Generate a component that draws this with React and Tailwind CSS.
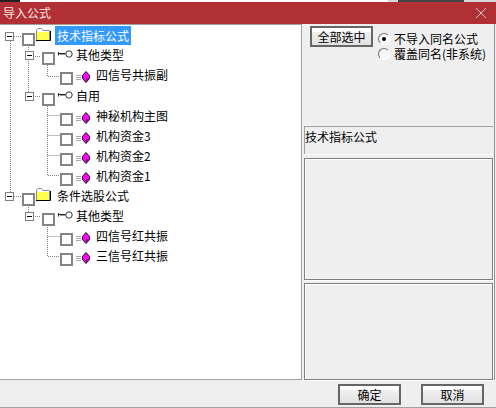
const sans = "font-['Noto_Sans_CJK_SC','Liberation_Sans',sans-serif]";

function Exp() {
  return (
    <span className="w-[9px] h-[9px] border border-[#808080] bg-white shrink-0 flex items-center justify-center">
      <span className="w-[5px] h-px bg-black shrink-0" />
    </span>
  );
}

function Check({ className = "" }) {
  return <span className={`block w-[13px] h-[13px] border-2 border-[#848484] bg-white shrink-0 ${className}`} />;
}

function Folder() {
  return (
    <svg width="15" height="13" viewBox="0 0 15 13" className="block shrink-0">
      <path d="M0.5 12.5V2L2 .5H5.5L7 2.5H13.5V12.5Z" fill="#fff" stroke="#8a8a8a" />
      <rect x="1" y="4" width="12" height="8" fill="#ffff4d" />
      <path d="M0 12.5H14.5V3" fill="none" stroke="#000" />
    </svg>
  );
}

function Key() {
  return (
    <svg width="15" height="8" viewBox="0 0 15 8" className="block shrink-0">
      <path d="M0 3.5H7.5M.5 2V5.5" stroke="#222" fill="none" />
      <path d="M2 4.5H7.5" stroke="#999" />
      <circle cx="11" cy="4" r="3.2" fill="#fff" stroke="#333" />
    </svg>
  );
}

function Gem() {
  return (
    <svg width="14" height="12" viewBox="0 0 14 12" className="block shrink-0">
      <path d="M0 4.5H5M0 6.5H5M0 8.5H5" stroke="#aaa" />
      <path d="M10 .5L13.5 4.5V7.5L10 11.5L6.5 7.5V4.5Z" fill="#ff00ff" stroke="#111" />
      <path d="M10 7L13 7.5L10 11Z" fill="#8b008b" />
    </svg>
  );
}

function Row({ indent, type, label, selected, h = "h-[20px]" }) {
  const pad = { 0: "pl-[5px]", 1: "pl-[25px]", 2: "pl-[60px]" }[indent];
  return (
    <div className={`relative flex items-start ${h} ${pad}`}>
      {indent < 2 && (
        <span className="mt-[5px] mr-[8px] shrink-0">
          <Exp />
        </span>
      )}
      <Check className="mt-[6px]" />
      {type === "folder" && (
        <span className="ml-[1px] mt-[1px] shrink-0">
          <Folder />
        </span>
      )}
      {type === "key" && (
        <span className="ml-[3px] mt-[4px] shrink-0">
          <Key />
        </span>
      )}
      {type === "gem" && (
        <span className="ml-[3px] mt-[5px] shrink-0">
          <Gem />
        </span>
      )}
      <span
        className={`text-[12px] text-black whitespace-nowrap ${
          type === "folder"
            ? "ml-[4px] px-[2px] -mt-px leading-[19px]"
            : type === "key"
            ? "ml-[3px] leading-[18px]"
            : "ml-[6px] leading-[18px]"
        } ${selected ? "bg-[#3399ff] text-white" : ""}`}
      >
        {label}
      </span>
    </div>
  );
}

const rows = [
  { indent: 0, type: "folder", label: "技术指标公式", selected: true, h: "h-[19px]" },
  { indent: 1, type: "key", label: "其他类型" },
  { indent: 2, type: "gem", label: "四信号共振副", h: "h-[21px]" },
  { indent: 1, type: "key", label: "自用" },
  { indent: 2, type: "gem", label: "神秘机构主图" },
  { indent: 2, type: "gem", label: "机构资金3" },
  { indent: 2, type: "gem", label: "机构资金2" },
  { indent: 2, type: "gem", label: "机构资金1" },
  { indent: 0, type: "folder", label: "条件选股公式" },
  { indent: 1, type: "key", label: "其他类型" },
  { indent: 2, type: "gem", label: "四信号红共振" },
  { indent: 2, type: "gem", label: "三信号红共振" },
];

function Guides() {
  const d =
    "M10.5 16V168 M14 11.5H22 M28.5 20V27 M28.5 36V68 M33 31.5H41 M33 71.5H41 M47.5 40V51.5H60 M47.5 81V150.5H60 M47.5 90.5H60 M47.5 110.5H60 M47.5 130.5H60 M14 171.5H22 M28.5 180V188 M33 191.5H41 M47.5 200V231.5H60 M47.5 211.5H60";
  return (
    <svg width="70" height="240" className="absolute left-0 top-0 pointer-events-none" aria-hidden="true">
      <path d={d} fill="none" stroke="#808080" strokeDasharray="1 1" />
    </svg>
  );
}

function Radio({ checked, label }) {
  return (
    <label className="flex items-center h-[15px] gap-[4px]">
      <span className="w-[12px] h-[12px] rounded-full border border-[#707070] border-r-white border-b-white bg-[#f7f7f7] flex items-center justify-center shrink-0">
        {checked && <span className="w-[4px] h-[4px] rounded-full bg-black" />}
      </span>
      <span className="block h-[15px] text-[12px] leading-[15px] text-black whitespace-nowrap">{label}</span>
    </label>
  );
}

function Btn({ children, className = "" }) {
  return (
    <button className={`border-2 border-[#666] bg-gradient-to-b from-white from-[20%] via-[#efefef] via-[25%] to-[#e2e2e2] text-[12px] leading-none text-black flex items-center justify-center ${className}`}>
      {children}
    </button>
  );
}

export default function App() {
  return (
    <div className={`w-[496px] h-[408px] overflow-hidden flex flex-col bg-[#efefef] ${sans}`}>
      <div className="h-[2px] flex shrink-0 bg-white">
        <span className="w-[20px] bg-[#222]" />
        <span className="w-[368px] bg-white" />
        <span className="w-[10px] bg-[#d8d8d8]" />
        <span className="w-[66px] bg-[#444]" />
        <span className="flex-1 bg-[#d8d8d8]" />
      </div>
      <div className="h-[22px] bg-[#b03035] flex items-center justify-between pl-[3px] pr-[10px] shrink-0">
        <span className="text-[12px] text-[#f5e5e5]">导入公式</span>
        <svg width="10" height="10" viewBox="0 0 10 10"><path d="M0 0L10 10M10 0L0 10" stroke="#e8c8c8" /></svg>
      </div>
      <div className="flex h-[356px] shrink-0">
        <div className="relative w-[302px] bg-white border-t border-r border-b border-[#a0a0a0] shrink-0 pt-[2px]">
          <Guides />
          {rows.map((r, i) => <Row key={i} {...r} />)}
        </div>
        <div className="flex-1 pl-[2px] pr-[1px] mr-px border-r border-[#909090] flex flex-col">
          <div className="h-[102px] flex items-start pt-[2px] pl-[6px] gap-[5px] shrink-0">
            <Btn className="w-[63px] h-[21px]">全部选中</Btn>
            <div className="flex flex-col pt-[5px]">
              <Radio checked label="不导入同名公式" />
              <Radio label="覆盖同名(非系统)" />
            </div>
          </div>
          <div className="h-[28px] border-t border-l border-[#a0a0a0] shadow-[0_1px_0_#fff] text-[12px] leading-[18px] text-black pt-px shrink-0">技术指标公式</div>
          <div className="h-[122px] border border-[#808080] shadow-[inset_1px_1px_0_#fff,1px_1px_0_#fff] mt-[4px] shrink-0" />
          <div className="h-[97px] border border-[#808080] shadow-[inset_1px_1px_0_#fff,1px_1px_0_#fff] mt-[3px] shrink-0" />
        </div>
      </div>
      <div className="flex-1 flex items-start justify-end gap-[20px] pt-[4px] pr-[12px] border-b border-[#a0a0a0]">
        <Btn className="w-[63px] h-[21px]">确定</Btn>
        <Btn className="w-[63px] h-[21px]">取消</Btn>
      </div>
    </div>
  );
}
